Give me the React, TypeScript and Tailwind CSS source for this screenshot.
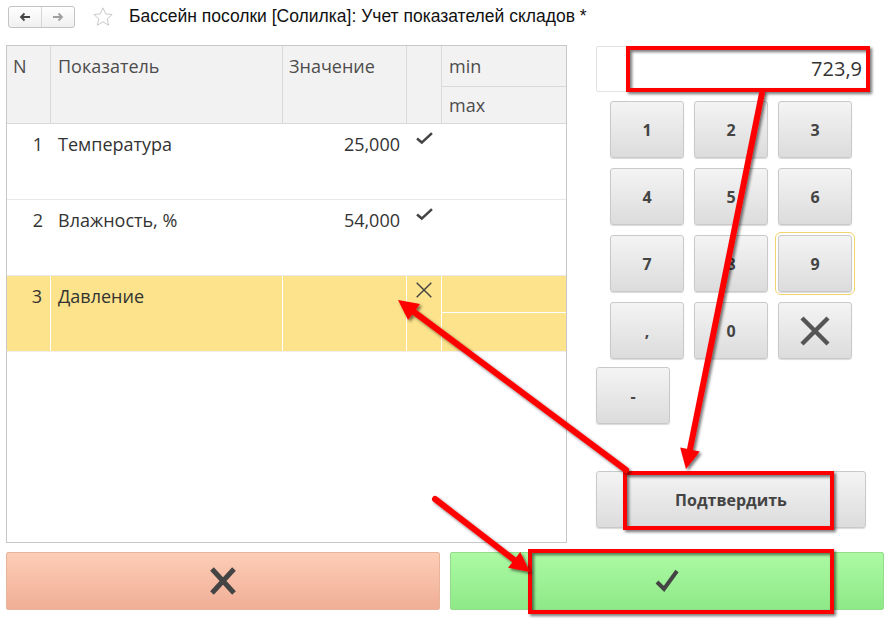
import React from 'react';

type Row = { n: number; name: string; value: string; ok: boolean; active?: boolean };

const rows: Row[] = [
  { n: 1, name: 'Температура', value: '25,000', ok: true },
  { n: 2, name: 'Влажность, %', value: '54,000', ok: true },
  { n: 3, name: 'Давление', value: '', ok: false, active: true },
];

const keys = ['1', '2', '3', '4', '5', '6', '7', '8', '9', ',', '0', 'del'];

function Check({ size = 14 }: { size?: number }) {
  return (
    <svg width={size} height={size} viewBox="0 0 14 14">
      <path d="M1.5 7 L5 10 L12.5 3" fill="none" stroke="#444" strokeWidth="1.9" />
    </svg>
  );
}

function Cross({ size = 16, w = 1.6, color = '#444' }: { size?: number; w?: number; color?: string }) {
  return (
    <svg width={size} height={size} viewBox="0 0 16 16">
      <path d="M1.5 1.5 L14.5 14.5 M14.5 1.5 L1.5 14.5" fill="none" stroke={color} strokeWidth={w} />
    </svg>
  );
}

// red marker arrows drawn over the screenshot
function Arrow({ x1, y1, x2, y2 }: { x1: number; y1: number; x2: number; y2: number }) {
  const dx = x2 - x1, dy = y2 - y1;
  const len = Math.hypot(dx, dy);
  const ux = dx / len, uy = dy / len;
  const hl = 20, hw = 10;
  const bx = x2 - ux * hl, by = y2 - uy * hl;
  const px = -uy, py = ux;
  return (
    <g filter="url(#sh)">
      <line x1={x1} y1={y1} x2={bx + ux * 2} y2={by + uy * 2} stroke="#ff0000" strokeWidth="6" strokeLinecap="round" />
      <polygon
        points={`${x2},${y2} ${bx + px * hw},${by + py * hw} ${bx - px * hw},${by - py * hw}`}
        fill="#ff0000"
      />
    </g>
  );
}

function Key({ k, focus }: { k: string; focus?: boolean }) {
  return (
    <div
      className={`flex h-[57px] w-[74px] items-center justify-center rounded-[3px] border border-[#c9c9c9] bg-linear-to-b from-[#f4f4f4] to-[#dcdcdc] text-[16px] font-bold text-[#444] shadow-[0_1px_1px_rgba(0,0,0,0.15)] ${
        focus ? 'outline outline-1 outline-offset-2 outline-[#f3d36b]' : ''
      }`}
    >
      {k === 'del' ? <Cross size={32} w={2.2} color="#555" /> : k}
    </div>
  );
}

export default function App() {
  return (
    <div className="relative h-[620px] w-[892px] overflow-hidden bg-white font-['Open_Sans',sans-serif]">
      {/* title bar */}
      <div className="flex h-[33px] items-center pl-[8px]">
        <div className="flex h-[22px] w-[67px] items-stretch rounded-[3px] border border-[#c3c3c3] bg-linear-to-b from-white to-[#f0f0f0]">
          <div className="flex flex-1 items-center justify-center border-r border-[#d6d6d6]">
            <svg width="12" height="10" viewBox="0 0 12 10">
              <path d="M11 5 H2 M5.5 1.5 L2 5 L5.5 8.5" fill="none" stroke="#444" strokeWidth="1.8" />
            </svg>
          </div>
          <div className="flex flex-1 items-center justify-center">
            <svg width="12" height="10" viewBox="0 0 12 10">
              <path d="M1 5 H10 M6.5 1.5 L10 5 L6.5 8.5" fill="none" stroke="#a0a0a0" strokeWidth="1.8" />
            </svg>
          </div>
        </div>
        <svg className="ml-[17px]" width="22" height="22" viewBox="0 0 24 24">
          <path
            d="M12 2 L14.9 8.6 L22 9.3 L16.6 14 L18.2 21 L12 17.3 L5.8 21 L7.4 14 L2 9.3 L9.1 8.6 Z"
            fill="none"
            stroke="#c4c4c4"
            strokeWidth="1"
          />
        </svg>
        <div className="ml-[15px] font-['Liberation_Sans',Arial,sans-serif] text-[17.5px] text-[#111]">
          Бассейн посолки [Солилка]: Учет показателей складов *
        </div>
      </div>

      <div className="flex items-start pl-[6px] pt-[12px]">
        {/* table */}
        <div className="h-[498px] w-[561px] border border-[#c8c8c8] text-[18px] text-[#333]">
          <div className="grid h-[78px] grid-cols-[44px_232px_124px_35px_124px] border-b border-[#d9d9d9] bg-[#f2f2f2] text-[#4d4d4d]">
            <div className="border-r border-[#dadada] pl-[6px] pt-[7px]">N</div>
            <div className="border-r border-[#dadada] pl-[7px] pt-[7px]">Показатель</div>
            <div className="border-r border-[#dadada] pl-[6px] pt-[7px]">Значение</div>
            <div className="border-r border-[#dadada]" />
            <div className="flex flex-col">
              <div className="h-[41px] border-b border-[#dadada] pl-[7px] pt-[7px]">min</div>
              <div className="flex-1 pl-[7px] pt-[5px]">max</div>
            </div>
          </div>
          {rows.map((r) => (
            <div
              key={r.n}
              className={`grid h-[76px] grid-cols-[44px_232px_124px_35px_124px] border-b ${
                r.active ? 'border-[#f0f0f0] bg-[#fce38c]' : 'border-[#e8e8e8]'
              }`}
            >
              <div className={`pr-[8px] pt-[7px] text-right ${r.active ? 'border-r border-white' : ''}`}>{r.n}</div>
              <div className={`pl-[7px] pt-[7px] ${r.active ? 'border-r border-white' : ''}`}>{r.name}</div>
              <div className={`pr-[7px] pt-[7px] text-right ${r.active ? 'border-r border-white' : ''}`}>{r.value}</div>
              <div className={`flex justify-center pt-[5px] ${r.active ? 'border-r border-white' : ''}`}>
                {r.ok ? <Check size={19} /> : <Cross size={18} w={1.3} />}
              </div>
              <div className="flex flex-col">
                {r.active && <div className="h-[37px] border-b border-white" />}
              </div>
            </div>
          ))}
        </div>

        {/* keypad */}
        <div className="ml-[29px] flex w-[272px] flex-col pt-[1px]">
          <div className="flex h-[46px] items-center justify-end rounded-[2px] border border-[#e2e2e2] pr-[5px] text-[20px] text-[#333]">
            723,9
          </div>
          <div className="mt-[9px] grid grid-cols-[74px_74px_74px] gap-x-[10px] gap-y-[10px] pl-[14px]">
            {keys.map((k) => (
              <Key key={k} k={k} focus={k === '9'} />
            ))}
          </div>
          <div className="mt-[8px]">
            <Key k="-" />
          </div>
          <div className="mt-[47px] flex h-[57px] w-[270px] items-center justify-center rounded-[3px] border border-[#c9c9c9] bg-linear-to-b from-[#f4f4f4] to-[#dcdcdc] text-[16px] font-bold text-[#444] shadow-[0_1px_1px_rgba(0,0,0,0.15)]">
            Подтвердить
          </div>
        </div>
      </div>

      {/* bottom buttons */}
      <div className="mt-[9px] flex gap-[10px] px-[6px]">
        <div className="flex h-[58px] w-[434px] items-center justify-center rounded-[2px] border border-[#e8b49c] bg-linear-to-b from-[#fdcdb6] to-[#f0ae96]">
          <svg width="30" height="30" viewBox="0 0 30 30">
            <path d="M4 3 L26 27 M26 3 L4 27" fill="none" stroke="#444" strokeWidth="5" />
          </svg>
        </div>
        <div className="flex h-[58px] w-[434px] items-center justify-center rounded-[2px] border border-[#93dc8c] bg-linear-to-b from-[#acfaa4] to-[#8ee987]">
          <svg width="26" height="26" viewBox="0 0 26 26">
            <path d="M3 14 L10 21 L23 3" fill="none" stroke="#444" strokeWidth="4" />
          </svg>
        </div>
      </div>

      {/* annotation overlay */}
      <svg className="pointer-events-none absolute inset-0" width="892" height="620" viewBox="0 0 892 620">
        <defs>
          <filter id="sh" x="-20%" y="-20%" width="140%" height="140%">
            <feDropShadow dx="2" dy="2" stdDeviation="1.5" floodColor="#000" floodOpacity="0.55" />
          </filter>
        </defs>
        <g filter="url(#sh)" fill="none" stroke="#ff0000" strokeWidth="4">
          <rect x="628" y="48" width="240" height="42" />
          <rect x="625" y="473" width="207" height="55" />
          <rect x="530" y="551" width="302" height="61" />
        </g>
        <Arrow x1={762} y1={93} x2={686} y2={469} />
        <Arrow x1={626} y1={470} x2={398} y2={300} />
        <Arrow x1={435} y1={499} x2={530} y2={572} />
      </svg>
    </div>
  );
}
